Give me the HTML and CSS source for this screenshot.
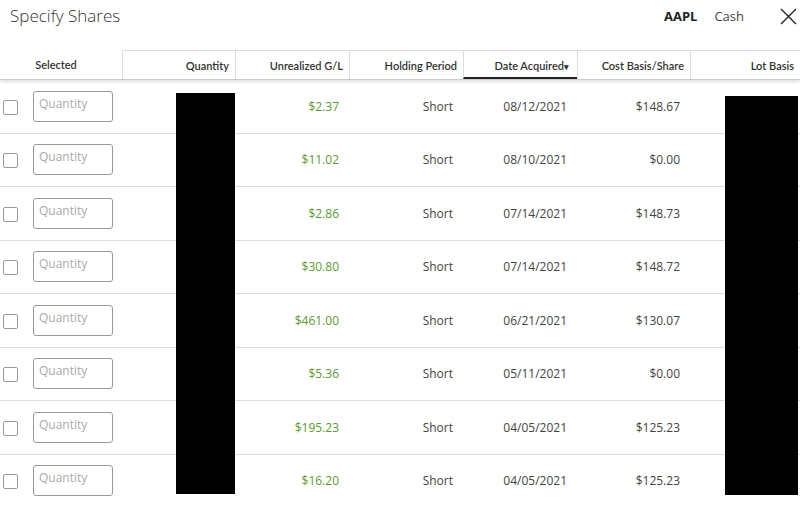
FILE: index.html
```html
<!DOCTYPE html>
<html lang="en">
<head>
  <meta charset="UTF-8">
  <title>Specify Shares</title>
  <link rel="stylesheet" href="styles.css">
</head>
<body>
  <header class="top">
    <h1>Specify Shares</h1>
    <div class="tabs">
      <span class="tab active">AAPL</span>
      <span class="tab">Cash</span>
      <span class="close">
        <svg width="17" height="17" viewBox="0 0 17 17"><path d="M1 1L16 16M16 1L1 16" stroke="#222" stroke-width="1.4" fill="none"/></svg>
      </span>
    </div>
  </header>

  <div class="lots">
    <div class="head">
      <div class="hc first">Selected</div>
      <div class="hc">Quantity</div>
      <div class="hc">Unrealized G/L</div>
      <div class="hc">Holding Period</div>
      <div class="hc sorted">Date Acquired<span class="caret">&#9662;</span></div>
      <div class="hc">Cost Basis/Share</div>
      <div class="hc">Lot Basis</div>
    </div>

    <div class="row">
      <div class="sel"><span class="box"></span><input type="text" placeholder="Quantity"></div>
      <div></div>
      <div class="c gain">$2.37</div>
      <div class="c">Short</div>
      <div class="c">08/12/2021</div>
      <div class="c">$148.67</div>
      <div></div>
    </div>
    <div class="row">
      <div class="sel"><span class="box"></span><input type="text" placeholder="Quantity"></div>
      <div></div>
      <div class="c gain">$11.02</div>
      <div class="c">Short</div>
      <div class="c">08/10/2021</div>
      <div class="c">$0.00</div>
      <div></div>
    </div>
    <div class="row">
      <div class="sel"><span class="box"></span><input type="text" placeholder="Quantity"></div>
      <div></div>
      <div class="c gain">$2.86</div>
      <div class="c">Short</div>
      <div class="c">07/14/2021</div>
      <div class="c">$148.73</div>
      <div></div>
    </div>
    <div class="row">
      <div class="sel"><span class="box"></span><input type="text" placeholder="Quantity"></div>
      <div></div>
      <div class="c gain">$30.80</div>
      <div class="c">Short</div>
      <div class="c">07/14/2021</div>
      <div class="c">$148.72</div>
      <div></div>
    </div>
    <div class="row">
      <div class="sel"><span class="box"></span><input type="text" placeholder="Quantity"></div>
      <div></div>
      <div class="c gain">$461.00</div>
      <div class="c">Short</div>
      <div class="c">06/21/2021</div>
      <div class="c">$130.07</div>
      <div></div>
    </div>
    <div class="row">
      <div class="sel"><span class="box"></span><input type="text" placeholder="Quantity"></div>
      <div></div>
      <div class="c gain">$5.36</div>
      <div class="c">Short</div>
      <div class="c">05/11/2021</div>
      <div class="c">$0.00</div>
      <div></div>
    </div>
    <div class="row">
      <div class="sel"><span class="box"></span><input type="text" placeholder="Quantity"></div>
      <div></div>
      <div class="c gain">$195.23</div>
      <div class="c">Short</div>
      <div class="c">04/05/2021</div>
      <div class="c">$125.23</div>
      <div></div>
    </div>
    <div class="row">
      <div class="sel"><span class="box"></span><input type="text" placeholder="Quantity"></div>
      <div></div>
      <div class="c gain">$16.20</div>
      <div class="c">Short</div>
      <div class="c">04/05/2021</div>
      <div class="c">$125.23</div>
      <div></div>
    </div>

    <!-- redacted columns -->
    <div class="redact qty"></div>
    <div class="redact basis"></div>
  </div>
</body>
</html>
```

FILE: styles.css
```css
body {
  margin: 0;
  font-family: "Open Sans", Arial, sans-serif;
  color: #333;
  background-color: white;
  overflow: hidden;
}
.top {
  height: 50px;
  display: flex;
  justify-content: space-between;
  align-items: flex-start;
}
.top h1 {
  margin: 0;
  padding: 3px 0 0 10px;
  font-size: 17px;
  font-weight: 300;
  color: #333;
  line-height: 26px;
}
.tabs {
  display: flex;
  align-items: center;
  height: 32px;
  padding-right: 3px;
}
.tab {
  font-size: 13px;
  color: #444;
  margin-right: 17px;
}
.tab.active {
  font-weight: bold;
  color: #222;
}
.close {
  display: flex;
  margin-left: 19px;
}
.lots {
  position: relative;
}
.head, .row {
  display: grid;
  grid-template-columns: 122px 113px 114px 114px 114px 113px 110px;
}
.head {
  height: 29px;
  border-bottom: 1px solid #ccc;
  box-shadow: 0 2px 3px rgba(0,0,0,0.12);
  position: relative;
  z-index: 1;
}
.hc {
  font-family: Lato, "Open Sans", sans-serif;
  font-size: 11px;
  font-weight: 600;
  color: #333;
  text-align: right;
  padding: 8px 6px 0 0;
  border-top: 1px solid #ddd;
  border-left: 1px solid #ddd;
}
.hc.first {
  text-align: center;
  padding-right: 10px;
  border-top: none;
  border-left: none;
}
.hc.sorted {
  border-bottom: 2px solid #222;
  padding-right: 8px;
}
.caret {
  font-size: 9px;
}
.row {
  height: 53.5px;
  border-bottom: 1px solid #ddd;
  box-sizing: border-box;
  align-items: center;
  font-size: 12px;
}
.sel {
  display: flex;
  align-items: center;
}
.box {
  width: 13px;
  height: 13px;
  border: 1px solid #999;
  border-radius: 2px;
  margin: 2px 0 0 3px;
}
.sel input {
  width: 80px;
  height: 31px;
  box-sizing: border-box;
  margin-left: 15px;
  border: 1px solid #999;
  border-radius: 3px;
  padding: 0 0 6px 5px;
  font-family: "Open Sans", Arial, sans-serif;
  font-size: 12px;
}
.sel input::placeholder {
  color: #aaa;
}
.c {
  text-align: right;
  padding-right: 10px;
  color: #444;
}
.gain {
  color: #5b9a2f;
}
.redact {
  position: absolute;
  background-color: black;
  z-index: 2;
}
.redact.qty {
  left: 176px;
  top: 43px;
  width: 59px;
  height: 401px;
}
.redact.basis {
  left: 725px;
  top: 46px;
  width: 73px;
  height: 399px;
}
```
